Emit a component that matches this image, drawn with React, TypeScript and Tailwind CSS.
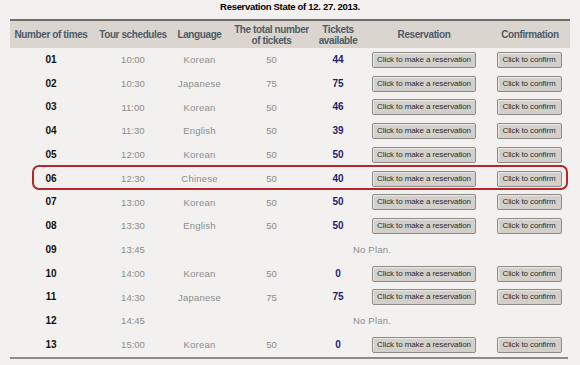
import React from "react";

type Row = {
  no: string;
  time: string;
  lang?: string;
  total?: string;
  avail?: string;
};

const rows: Row[] = [
  { no: "01", time: "10:00", lang: "Korean", total: "50", avail: "44" },
  { no: "02", time: "10:30", lang: "Japanese", total: "75", avail: "75" },
  { no: "03", time: "11:00", lang: "Korean", total: "50", avail: "46" },
  { no: "04", time: "11:30", lang: "English", total: "50", avail: "39" },
  { no: "05", time: "12:00", lang: "Korean", total: "50", avail: "50" },
  { no: "06", time: "12:30", lang: "Chinese", total: "50", avail: "40" },
  { no: "07", time: "13:00", lang: "Korean", total: "50", avail: "50" },
  { no: "08", time: "13:30", lang: "English", total: "50", avail: "50" },
  { no: "09", time: "13:45" },
  { no: "10", time: "14:00", lang: "Korean", total: "50", avail: "0" },
  { no: "11", time: "14:30", lang: "Japanese", total: "75", avail: "75" },
  { no: "12", time: "14:45" },
  { no: "13", time: "15:00", lang: "Korean", total: "50", avail: "0" },
];

function Btn({ label, wide }: { label: string; wide?: boolean }) {
  return (
    <button
      className={`${wide ? "w-[104px]" : "w-[65px]"} block mx-auto h-[16px] rounded-[2px] border border-[#8c8a86] bg-[#d3d0cb] text-[8px] leading-none text-[#2e2e2e] tracking-[-0.1px] shadow-[inset_1px_1px_0_#ebe9e5]`}
    >
      {label}
    </button>
  );
}

export default function App() {
  return (
    <div className="relative w-[580px] h-[365px] overflow-hidden bg-[#f2f1ef] font-['Liberation_Sans',Arial,sans-serif]">
      <h1 className="pt-[1px] h-[19px] text-center text-[9.5px] font-bold tracking-[-0.3px] text-black leading-[11px]">
        Reservation State of 12. 27. 2013.
      </h1>

      <table className="ml-[10px] w-[560px] table-fixed border-collapse">
        <colgroup>
          <col className="w-[82px]" />
          <col className="w-[82px]" />
          <col className="w-[51px]" />
          <col className="w-[93px]" />
          <col className="w-[40px]" />
          <col className="w-[132px]" />
          <col className="w-[80px]" />
        </colgroup>
        <thead>
          <tr className="h-[28px] border-t-2 border-[#6e6e6c] bg-[#dad6cf] text-[10px] font-bold leading-[11px] tracking-[-0.4px] text-[#4f5b67]">
            <th className="font-bold">Number of times</th>
            <th className="font-bold">Tour schedules</th>
            <th className="font-bold">Language</th>
            <th className="font-bold">
              The total number
              <br />
              of tickets
            </th>
            <th className="font-bold">
              Tickets
              <br />
              available
            </th>
            <th className="font-bold">Reservation</th>
            <th className="font-bold">Confirmation</th>
          </tr>
        </thead>
        <tbody>
          {rows.map((r) => (
            <tr key={r.no} className="h-[23.75px] text-center leading-none">
              <td className="p-0 text-[10px] font-bold text-[#111]">{r.no}</td>
              <td className="p-0 text-[9.5px] text-[#8c8c8c]">{r.time}</td>
              {r.lang ? (
                <>
                  <td className="p-0 text-[9.5px] text-[#8c8c8c] tracking-[0.2px]">{r.lang}</td>
                  <td className="p-0 text-[9.5px] text-[#8c8c8c]">{r.total}</td>
                  <td className="p-0 text-[10px] font-bold text-[#1d1f6e]">{r.avail}</td>
                  <td className="p-0">
                    <Btn label="Click to make a reservation" wide />
                  </td>
                  <td className="p-0 pr-[2px]">
                    <Btn label="Click to confirm" />
                  </td>
                </>
              ) : (
                <td colSpan={5} className="p-0 text-[9.5px] text-[#8c8c8c] tracking-[0.2px]">
                  No Plan.
                </td>
              )}
            </tr>
          ))}
        </tbody>
      </table>
      <div className="ml-[10px] w-[558px] h-[2px] bg-[#8a8c88]" />

      <div className="absolute left-[32px] top-[165px] w-[536px] h-[25px] rounded-[7px] border-2 border-[#b3262a]" />
    </div>
  );
}
